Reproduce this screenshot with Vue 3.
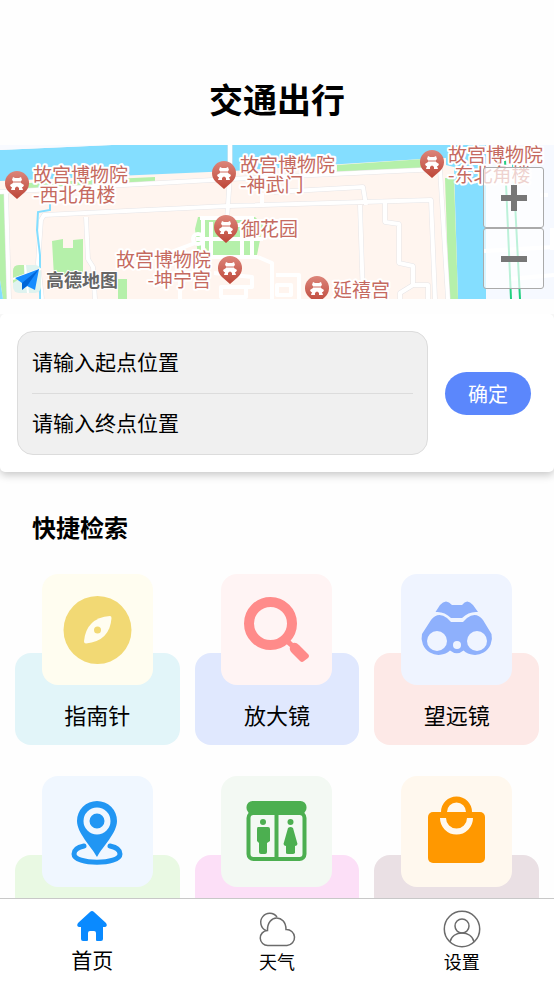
<script setup>
import { ref } from 'vue'

const start = ref('')
const end = ref('')
const activeTab = ref('home')

// 地图标注
const pins = [
  { x: 17, y: 27 },
  { x: 224, y: 17 },
  { x: 226, y: 71 },
  { x: 230, y: 112 },
  { x: 317, y: 132 },
  { x: 432, y: 6 }
]
const labels = [
  { x: 33, y: 37, text: '故宫博物院' },
  { x: 33, y: 57, text: '-西北角楼' },
  { x: 240, y: 27, text: '故宫博物院' },
  { x: 240, y: 47, text: '-神武门' },
  { x: 241, y: 91, text: '御花园' },
  { x: 211, y: 122, text: '故宫博物院', anchor: 'end' },
  { x: 211, y: 142, text: '-坤宁宫', anchor: 'end' },
  { x: 333, y: 152, text: '延禧宫' },
  { x: 448, y: 17, text: '故宫博物院' },
  { x: 448, y: 37, text: '-东北角楼' }
]

// 快捷检索
const items = [
  { key: 'compass', name: '指南针' },
  { key: 'magnifier', name: '放大镜' },
  { key: 'binoculars', name: '望远镜' },
  { key: 'place', name: '定位' },
  { key: 'toilet', name: '卫生间' },
  { key: 'shop', name: '购物' }
]

// 底部导航
const tabs = [
  { key: 'home', name: '首页' },
  { key: 'weather', name: '天气' },
  { key: 'setting', name: '设置' }
]
</script>

<template>
  <div class="page">
    <main class="content">
      <h1 class="title">交通出行</h1>

      <section class="map">
        <svg class="map-canvas" viewBox="0 0 554 154" preserveAspectRatio="xMidYMid slice">
          <defs>
            <linearGradient id="pinFill" x1="0" y1="0" x2="0" y2="1">
              <stop offset="0" stop-color="#dc857a" />
              <stop offset="1" stop-color="#bd4638" />
            </linearGradient>
          </defs>
          <rect width="554" height="154" fill="#fff5ef" />
          <rect x="484" width="70" height="154" fill="#f6f9ff" />
          <!-- 护城河 -->
          <path d="M0 5L112 0H486V154H458L454 22L422 14L232 26L0 36Z" fill="#84deff" />
          <path d="M0 0H112L0 5Z" fill="#f8faff" />
          <!-- 绿地 -->
          <g fill="#b5f0aa">
            <path d="M28 38L155 32V40L28 45Z" />
            <path d="M337 20L424 14V24L337 28Z" />
            <path d="M0 49H4L9 154H3L0 135Z" />
            <path d="M445 33H454L458 154H449Z" />
            <path d="M52 96L63 94V103H73V95L83 94V127L54 132Z" />
            <path d="M118 134H127V154H118Z" />
            <path d="M198 72H255L263 80L257 110L198 112L195 84Z" />
          </g>
          <path d="M0 135L3 154H0Z" fill="#84deff" />
          <path d="M424 14L446 13V31L424 30Z" fill="#fff5ef" />
          <!-- 道路 -->
          <g fill="none" stroke="#e6e5e7" stroke-width="5" stroke-linejoin="round">
            <path d="M0 47L230 34L440 24L448 154" />
            <path d="M6 45L9 154" />
            <path d="M42 154L38 118L41 75L44 70L228 61L431 55L435 154" />
            <path d="M230 0V30L227 75" />
            <path d="M86 72L88 114L93 122L95 154" />
            <path d="M360 60L363 154M385 57V77L399 79V118L413 121V140L400 148V154M413 140H428V154" />
            <path d="M274 47L363 42L366 60" />
          </g>
          <g fill="none" stroke="#fff" stroke-width="4" stroke-linejoin="round">
            <path d="M0 47L230 34L440 24L448 154" />
            <path d="M6 45L9 154" />
            <path d="M42 154L38 118L41 75L44 70L228 61L431 55L435 154" />
            <path d="M230 0V30L227 75" />
            <path d="M86 72L88 114L93 122L95 154" />
            <path d="M360 60L363 154M385 57V77L399 79V118L413 121V140L400 148V154M413 140H428V154" />
            <path d="M274 47L363 42L366 60" />
            <path d="M200 73H254M203 73V112M211 77V110M242 77V110M252 74V110M196 94H263M196 112H258M158 112L195 98M234 80H253" />
            <circle cx="198" cy="94" r="5" />
            <path d="M258 112L272 118V154M214 128L252 132V142H221V152H246V142M276 130H299V154M277 140H291V150H277ZM180 134V154M262 60V48" />
          </g>
          <path d="M50 59V65L38 67L37 85L40 110V154" fill="none" stroke="#84deff" stroke-width="2" />
          <path d="M484 106L554 102M510 134L554 130M540 50H548M552 83V105" fill="none" stroke="#fff" stroke-width="4" />
          <path d="M505 15L511 154M513 19L520 154" fill="none" stroke="#20cf80" stroke-width="2" />

          <g v-for="(p, i) in pins" :key="'p' + i" :transform="`translate(${p.x} ${p.y})`">
            <path d="M0 27L-8 20A12 12 0 1 1 8 20Z" fill="url(#pinFill)" />
            <path d="M-4 5L-2 6H2L4 5L5 8L4 9V11L7 13L6 15H5L6 18H2V16Q0 13-2 16V18H-6L-5 15H-6L-7 13L-4 11V9L-5 8Z" fill="#fff" />
            <path d="M-4 10H4" stroke="#cf6c60" />
          </g>
          <text
            v-for="(l, i) in labels"
            :key="'l' + i"
            :x="l.x"
            :y="l.y"
            :text-anchor="l.anchor || 'start'"
            class="map-label"
          >{{ l.text }}</text>

          <rect x="13" y="120" width="28" height="28" rx="6" fill="#dff3ef" />
          <path d="M13 138V126Q13 120 19 120H24V131Z" fill="#bbeeab" />
          <path d="M13 134L41 124M25 120L28 148" stroke="#fff" stroke-width="2" />
          <path d="M15 133L39 124L35 145L27 141L22 144V138Z" fill="#168cff" />
          <path d="M22 138L39 124L27 141L22 145Z" fill="#0065d8" />
          <text x="46" y="142" class="map-brand">高德地图</text>
        </svg>
        <div class="zoom">
          <button type="button" aria-label="放大">
            <svg viewBox="0 0 26 26"><path d="M13 0V26M0 13H26" stroke="#777" stroke-width="6" /></svg>
          </button>
          <button type="button" aria-label="缩小">
            <svg viewBox="0 0 26 26"><path d="M0 13H26" stroke="#777" stroke-width="6" /></svg>
          </button>
        </div>
      </section>

      <form class="search" @submit.prevent>
        <div class="fields">
          <input v-model="start" type="text" placeholder="请输入起点位置" aria-label="起点位置" />
          <input v-model="end" type="text" placeholder="请输入终点位置" aria-label="终点位置" />
        </div>
        <button type="submit" class="confirm">确定</button>
      </form>

      <h2 class="subtitle">快捷检索</h2>
      <div class="grid">
        <button v-for="item in items" :key="item.key" type="button" class="item" :class="item.key">
          <span class="icon">
            <svg v-if="item.key === 'compass'" viewBox="0 0 111 111">
              <circle cx="55.500" cy="56" r="34" fill="#f2d974" />
              <path d="M68 42Q69.500 42 69.500 44Q68 67 44 69.500Q42 69.500 42 67.500Q44 44 68 42Z" fill="#fffdf0" />
              <circle cx="55.500" cy="56" r="3.500" fill="#f2d974" />
            </svg>
            <svg v-else-if="item.key === 'magnifier'" viewBox="0 0 111 111">
              <circle cx="49.500" cy="49.500" r="21.500" fill="none" stroke="#ff8b8a" stroke-width="10" />
              <path d="M63 68L67 64L72 69Q75 68 78 71L87 80Q89 82 87 84L83 87Q81 89 79 87L71 79Q68 76 69 73Z" fill="#ff8b8a" />
            </svg>
            <svg v-else-if="item.key === 'binoculars'" viewBox="0 0 111 111">
              <path d="M34.500 38L39 31Q45 24 51 31H61Q66 24 72 31L77 38Q68 37 61 44H50Q43 37 34.500 38Z" fill="#8eb0fc" />
              <path d="M30 46Q37 37 46 44L50 48H62L66 44Q75 37 82 46L90.500 60A17 17 0 0 1 62.500 76.500Q56 82 49 76.500A17 17 0 0 1 21 60Z" fill="#8eb0fc" />
              <g fill="#eff4ff">
                <circle cx="36" cy="67" r="10" />
                <circle cx="76" cy="67" r="10" />
                <circle cx="56" cy="71" r="4" />
              </g>
            </svg>
            <svg v-else-if="item.key === 'place'" viewBox="0 0 111 111">
              <path d="M42 70Q32 72 32 78C32 89 78 89 78 78Q78 72 68 70" fill="none" stroke="#2196f3" stroke-width="5" stroke-linecap="round" />
              <path d="M55 81C49 70 35 57 35 45A20 20 0 0 1 75 45C75 57 61 70 55 81Z" fill="#2196f3" />
              <circle cx="55" cy="45" r="10.500" fill="#2196f3" stroke="#f0f7ff" stroke-width="6" />
            </svg>
            <svg v-else-if="item.key === 'toilet'" viewBox="0 0 111 111">
              <rect x="25.500" y="25" width="60" height="13" rx="6" fill="#4caf50" />
              <rect x="27.500" y="37" width="56" height="46" rx="5" fill="none" stroke="#4caf50" stroke-width="4" />
              <path d="M55.500 37V83" stroke="#4caf50" stroke-width="4" />
              <g fill="#4caf50">
                <circle cx="42" cy="46" r="3" />
                <path d="M37 51H47Q49 51 49 53V65L46 67V76Q46 78 44 78H40Q38 78 38 76V67L36 65V53Q36 51 37 51Z" />
                <circle cx="69.500" cy="46" r="3" />
                <path d="M67 52Q69.500 50 72 52L76.500 68Q76 70 74 70V77Q73 78 72 78H67Q65 78 65 77V70Q63 70 62.500 68Z" />
              </g>
            </svg>
            <svg v-else viewBox="0 0 111 111">
              <rect x="27" y="36" width="57" height="51" rx="5" fill="#ff9800" />
              <path d="M43 36A12.500 12.500 0 0 1 68 36" fill="none" stroke="#ff9800" stroke-width="6" />
              <path d="M42 42A13.500 13.500 0 0 0 69 42" fill="none" stroke="#fff8ee" stroke-width="6" />
            </svg>
          </span>
          <span class="name">{{ item.name }}</span>
        </button>
      </div>
    </main>

    <nav class="tabbar">
      <a
        v-for="tab in tabs"
        :key="tab.key"
        :href="'#' + tab.key"
        :class="{ active: activeTab === tab.key }"
        @click="activeTab = tab.key"
      >
        <svg v-if="tab.key === 'home'" class="home-icon" viewBox="0 0 32 32">
          <path d="M14 2Q16 0 18 2L30 13Q32 16 29 17H27V29Q27 31 25 31H21Q20 31 20 30V23Q20 21 18 21H14Q12 21 12 23V30Q12 31 11 31H7Q5 31 5 29V17H3Q0 16 2 13Z" fill="#0a8aff" />
        </svg>
        <svg v-else-if="tab.key === 'weather'" viewBox="0 0 38 38" fill="none" stroke="#6b6b6b" stroke-width="1.500">
          <path d="M8 20.500A9 9 0 1 1 19 7" />
          <path d="M10 35.500A7.500 7.500 0 0 1 9.500 20.500C9 4 28 4 28 19.500A8 8 0 0 1 29 35.500Z" />
        </svg>
        <svg v-else viewBox="0 0 38 38" fill="none" stroke="#6b6b6b" stroke-width="1.500">
          <circle cx="19" cy="19" r="17.700" />
          <circle cx="19" cy="16" r="7" />
          <path d="M7 32C9 20 29 20 31 32" />
        </svg>
        <span>{{ tab.name }}</span>
      </a>
    </nav>
  </div>
</template>

<style>
body { background: #fefefe; }
</style>

<style scoped>
.page {
  display: flex; flex-direction: column; height: 100vh; color: #000;
  font-family: "Noto Sans CJK SC", "Noto Sans", sans-serif;
}
.page * { box-sizing: border-box; }
.page button { font-family: inherit; cursor: pointer; }
.content { flex: 1; min-height: 0; overflow-y: auto; scrollbar-width: none; }
.title {
  margin: 0; padding: 75px 0 22px;
  font-size: 34px; line-height: 48px; font-weight: 700; text-align: center;
}

.map { position: relative; height: 154px; }
.map-canvas { display: block; width: 100%; height: 100%; }
.map-label {
  font-size: 19px; fill: #c56a60;
  stroke: #fff; stroke-width: 4px; stroke-linejoin: round; paint-order: stroke;
}
.map-brand {
  font-size: 18px; font-weight: 700; fill: #666;
  stroke: #fff; stroke-width: 2px; paint-order: stroke;
}
.zoom { position: absolute; top: 22px; right: 10px; display: flex; flex-direction: column; }
.zoom button {
  display: flex; align-items: center; justify-content: center;
  width: 61px; height: 61px; padding: 0;
  background: rgba(255, 255, 255, 0.7); border: 1px solid #aaa; border-radius: 3px;
}
.zoom svg { width: 26px; height: 26px; }

.search {
  display: flex; align-items: center; gap: 17px;
  margin-top: 15px; padding: 17px 23px 17px 17px;
  background: #fff; border-radius: 5px; box-shadow: 0 3px 8px rgba(0, 0, 0, 0.22);
  clip-path: inset(0 0 -16px 0);
}
.fields {
  flex: 1; min-width: 0; padding: 0 14px;
  background: #f0f0f0; border: 1px solid #dcdcdc; border-radius: 16px;
}
.fields input {
  display: block; width: 100%; height: 61px; padding: 0 0 4px;
  font-family: inherit; font-size: 21px; color: #000;
  background: none; border: none; outline: none;
}
.fields input + input { border-top: 1px solid #dcdcdc; }
.fields input::placeholder { color: #000; opacity: 1; }
.confirm {
  width: 86px; height: 43px; padding: 0;
  font-size: 20px; color: #fff; background: #5b87fc; border: none; border-radius: 22px;
}

.subtitle { margin: 0; padding: 37px 32px 29px; font-size: 24px; line-height: 36px; font-weight: 700; }
.grid {
  display: grid; grid-template-columns: repeat(3, 1fr); gap: 31px 15px;
  padding: 0 15px 15px;
}
/* 底色只占下半部分 */
.item {
  position: relative; z-index: 0;
  display: flex; flex-direction: column; align-items: center; height: 171px; padding: 0;
  color: #000; background: none; border: none;
}
.item::before {
  content: ""; position: absolute; inset: 79px 0 0; z-index: -1;
  background: var(--base); border-radius: 16px;
}
.item .icon { width: 111px; height: 111px; border-radius: 16px; }
.item .icon svg { display: block; width: 100%; height: 100%; }
.item .name { margin-top: 13px; font-size: 22px; line-height: 32px; }
.compass { --base: #e2f5f9; }
.compass .icon { background: #fffdf0; }
.magnifier { --base: #e0e8fe; }
.magnifier .icon { background: #fff4f4; }
.binoculars { --base: #fde9e7; }
.binoculars .icon { background: #eff4ff; }
.place { --base: #e9f9e3; }
.place .icon { background: #f0f7ff; }
.toilet { --base: #fcdff7; }
.toilet .icon { background: #f3f9f3; }
.shop { --base: #eae0e4; }
.shop .icon { background: #fff8ee; }

.tabbar { display: flex; height: 86px; background: #fff; border-top: 1px solid #c8c8c8; }
.tabbar a {
  flex: 1; display: flex; flex-direction: column; align-items: center;
  padding-top: 11px; font-size: 18px; line-height: 26px; color: #000; text-decoration: none;
}
.tabbar svg { width: 38px; height: 38px; }
.tabbar .active { font-size: 21px; }
.tabbar .home-icon { width: 32px; height: 32px; margin-bottom: 4px; }
</style>
